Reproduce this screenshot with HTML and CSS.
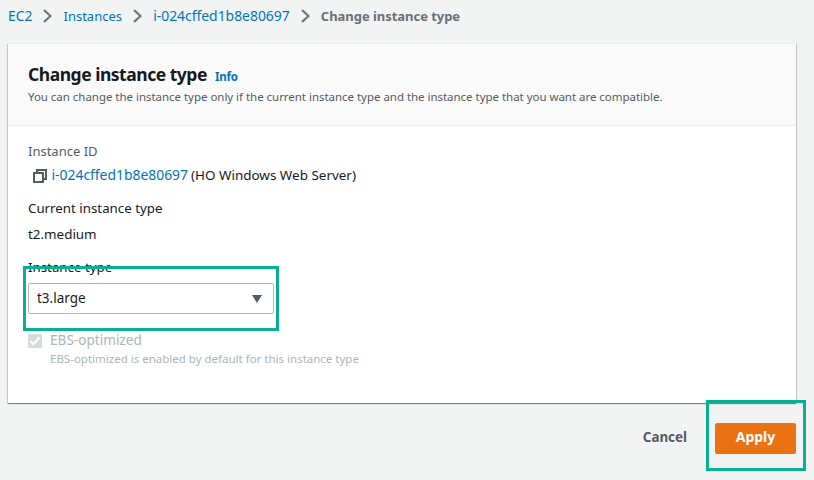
FILE: index.html
```html
<!DOCTYPE html>
<html lang="en">
<head>
<meta charset="utf-8">
<title>Change instance type</title>
<link rel="stylesheet" href="styles.css">
</head>
<body>
<nav class="crumbs">
  <a class="crumb-root">EC2</a>
  <svg class="chev" viewBox="0 0 9 14"><path d="M1 1l6.5 6L1 13"/></svg>
  <a class="crumb">Instances</a>
  <svg class="chev" viewBox="0 0 9 14"><path d="M1 1l6.5 6L1 13"/></svg>
  <a class="id">i-024cffed1b8e80697</a>
  <svg class="chev" viewBox="0 0 9 14"><path d="M1 1l6.5 6L1 13"/></svg>
  <b class="current">Change instance type</b>
</nav>
<main class="card">
  <header class="card-head">
    <h1><span>Change instance type</span><a class="info">Info</a></h1>
    <p class="desc">You can change the instance type only if the current instance type and the instance type that you want are compatible.</p>
  </header>
  <section class="card-body">
    <div class="label">Instance ID</div>
    <div class="id-row">
      <svg class="copy" viewBox="0 0 14 14"><path d="M4 4V1h9v9h-3M1 4h9v9H1z"/></svg>
      <a class="id">i-024cffed1b8e80697</a>
      <span class="name">(HO Windows Web Server)</span>
    </div>
    <div class="cur">Current instance type</div>
    <div class="val">t2.medium</div>
    <div class="type">Instance type</div>
    <div class="select"><span>t3.large</span><svg class="caret" viewBox="0 0 10 8"><path d="M0 0h10L5 8z"/></svg><i class="mark mark-select"></i></div>
    <div class="check-row">
      <svg class="check" viewBox="0 0 14 14"><rect width="14" height="14" rx="1.5"/><path d="M2.5 7.2l3 3 6-7"/></svg>
      <div><div class="ebs">EBS-optimized</div><div class="hint">EBS-optimized is enabled by default for this instance type</div></div>
    </div>
  </section>
</main>
<footer class="actions">
  <a class="cancel">Cancel</a>
  <div class="apply"><span>Apply</span><i class="mark mark-apply"></i></div>
</footer>
</body>
</html>
```

FILE: styles.css
```css
* { box-sizing: border-box; margin: 0; padding: 0; }
body { width: 814px; height: 480px; overflow: hidden; background: #f2f3f3; color: #16191f; font: 13px/20px "Noto Sans", "Open Sans", sans-serif; }
a { color: #0073bb; }
.crumbs { display: flex; align-items: center; height: 20px; margin: 6px 0 0 8px; }
.chev { width: 9px; height: 14px; margin: 0 11.2px 0 11px; fill: none; stroke: #687078; stroke-width: 2; }
.crumb-root { font-size: 13.8px; }
.id { font-size: 13.9px; }
.current { color: #687078; letter-spacing: -.04px; }
.card { width: 788px; height: 360px; margin: 17px 0 0 8px; background: #fff; box-shadow: 0 1px 1px 0 #001c244d, 1px 1px 1px 0 #001c2426, -1px 1px 1px 0 #001c2426; border-top: 1px solid #eaeded; }
.card-head { height: 82px; padding: 19px 20px 0; background: #fafafa; border-bottom: 1px solid #eaeded; }
h1 { display: flex; align-items: baseline; gap: 8px; font-size: 17.5px; line-height: 22px; letter-spacing: -.48px; }
.info { font-size: 11.5px; letter-spacing: -.2px; }
.desc { margin-top: -1px; font-size: 11.5px; line-height: 20px; letter-spacing: -.03px; color: #545b64; }
.card-body { padding: 15px 20px 0; }
.label { color: #545b64; }
.id-row { display: flex; align-items: center; height: 20px; margin-top: 4px; padding-left: 5px; }
.copy { width: 14px; height: 14px; margin: 2px 4.5px 0 0; fill: none; stroke: #545b64; stroke-width: 2; }
.name { margin-left: 3px; font-size: 13.45px; }
.cur { margin-top: 13px; font-size: 13.3px; }
.val { margin-top: 6px; font-size: 13.4px; }
.type { margin-top: 13px; font-size: 13.3px; }
.select { position: relative; display: flex; align-items: center; justify-content: space-between; width: 246px; height: 31px; margin-top: 6px; padding: 0 11px 0 8px; border: 1px solid #aab7b8; border-radius: 2px; font-size: 13.5px; }
.select span { padding-bottom: 2px; }
.caret { width: 10px; height: 8px; fill: #545b64; }
.mark { position: absolute; border: 3px solid #08af92; }
.mark-select { left: -6px; top: -18px; width: 256px; height: 65px; }
.check-row { display: flex; gap: 8px; margin-top: 16px; }
.check { width: 14px; height: 14px; margin-top: 4px; fill: #d5dbdb; }
.check path { fill: none; stroke: #fff; stroke-width: 2; }
.ebs { color: #aab7b8; font-size: 13.6px; }
.hint { color: #aab7b8; font-size: 11.5px; line-height: 17px; }
.actions { display: flex; justify-content: flex-end; align-items: center; gap: 28px; width: 796px; margin-top: 20px; font-weight: 700; }
.cancel { padding-bottom: 3px; color: #545b64; font-size: 13.4px; }
.apply { position: relative; display: flex; align-items: center; justify-content: center; width: 81px; height: 31px; padding-bottom: 3px; background: #ec7211; color: #fff; border-radius: 2px; font-size: 14px; }
.mark-apply { left: -9px; top: -23px; width: 100px; height: 71px; }
```
